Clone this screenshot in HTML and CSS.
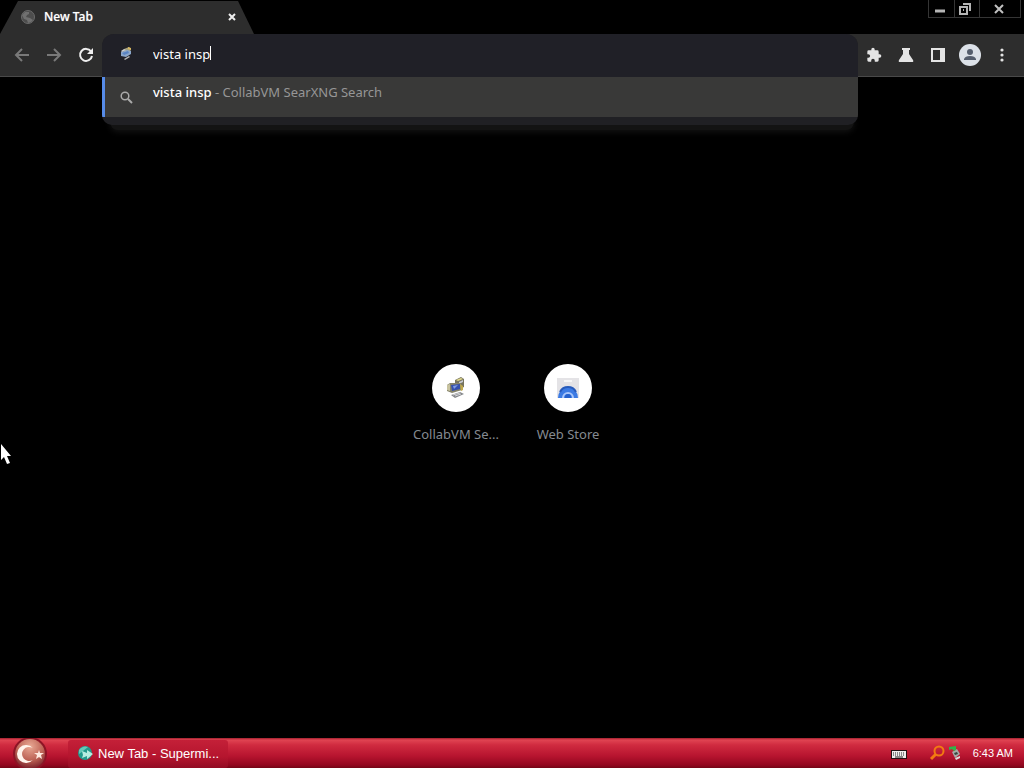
FILE: index.html
```html
<!DOCTYPE html>
<html lang="en">
<head>
<meta charset="utf-8">
<meta name="viewport" content="width=device-width, initial-scale=1">
<title>New Tab</title>
<link rel="stylesheet" href="styles.css">
</head>
<body>
<svg class="defs" aria-hidden="true">
  <symbol id="vm" viewBox="0 0 20 22">
    <path d="M9 3l6-3 3 2v8l-6 3-3-3z" fill="#77745e"/>
    <path d="M10 3l5-2 2 1-5 2z" fill="#e0d98d"/>
    <path d="M13 5l4-2v2l-4 2z" fill="#c9cbd4"/>
    <path d="M1 8l3-2 11 0 1 7-10 3-5-2z" fill="#85836a"/>
    <path d="M1 8l3-1v7l-3-1z" fill="#c8c3a0"/>
    <path d="M5 8l9-1v5l-8 2z" fill="#344fae"/>
    <path d="M7 9l5-1-4 4z" fill="#7d9ce5"/>
    <path d="M14 7l3 2v4l-2 1z" fill="#bfa84d"/>
    <path d="M5 18l9-3 4 2-9 4z" fill="#85878b"/>
    <path d="M7 18l7-2M9 19l6-2" stroke="#d4d5d8" stroke-width="1"/>
  </symbol>
  <symbol id="vm-small" viewBox="0 0 12 14">
    <path d="M4 2l5-2 2 2-1 3-5 1z" fill="#a5a17c"/>
    <path d="M8 0l3 1v2l-3-1z" fill="#d9b75f"/>
    <path d="M1 5l6-2 4 1v3l-5 3-5-1z" fill="#8ba6ca"/>
    <path d="M2 6l6-2 1 2-5 2z" fill="#5a84c4"/>
    <path d="M1 4l3-2 2 1-4 2z" fill="#d0d3d5"/>
    <path d="M4 12l5-3 1 1-5 3z" fill="#b5b5b5"/>
  </symbol>
</svg>

<header class="tabstrip">
  <div class="tab">
    <svg class="tab-icon" viewBox="0 0 14 14" aria-hidden="true">
      <circle cx="7" cy="7" r="6.5" fill="#4d4d4d" stroke="#6b6b6b"/>
      <path d="M1 5l3-3 4 0 0 2-2 1-1 2 4 1 3 2-2 2-3 1-1-3-3-1z" fill="#707070"/>
    </svg>
    <span class="tab-title">New Tab</span>
    <button class="tab-close" aria-label="Close tab"><svg width="8" height="8" viewBox="0 0 8 8"><path d="M1 1l6 6M7 1L1 7" stroke="#eee" stroke-width="2"/></svg></button>
  </div>
  <div class="window-buttons">
    <button aria-label="Minimize"><svg width="24" height="16" viewBox="0 0 24 16"><path d="M5 10h10" stroke="#b5b5b5" stroke-width="3"/></svg></button>
    <button aria-label="Restore"><svg width="24" height="16" viewBox="0 0 24 16" fill="none" stroke="#b5b5b5" stroke-width="2"><path d="M5 6h7v7H5zM8 3h7v7M8 9h1"/></svg></button>
    <button class="wide" aria-label="Close"><svg width="40" height="16" viewBox="0 0 40 16"><path d="M15 4l8 8M23 4l-8 8" stroke="#c0c0c0" stroke-width="2"/></svg></button>
  </div>
</header>

<nav class="toolbar">
  <div class="nav-buttons">
    <button aria-label="Back"><svg viewBox="0 0 16 16" fill="none" stroke="#797979" stroke-width="2"><path d="M15 8H2M8 2L2 8l6 6"/></svg></button>
    <button aria-label="Forward"><svg viewBox="0 0 16 16" fill="none" stroke="#797979" stroke-width="2"><path d="M1 8h13M8 2l6 6-6 6"/></svg></button>
    <button aria-label="Reload"><svg viewBox="0 0 16 16"><path d="M13 4.4A6 6 0 1 0 14 9" fill="none" stroke="#eee" stroke-width="2"/><path d="M15 1v6H9z" fill="#eee"/></svg></button>
  </div>
  <div class="omnibox">
    <div class="omnibox-shadow"></div>
    <div class="omnibox-panel">
      <div class="omnibox-field">
        <svg class="field-icon" aria-hidden="true"><use href="#vm-small"/></svg>
        <input class="query" type="text" value="vista insp" aria-label="Address and search bar">
        <span class="caret"></span>
      </div>
      <a class="suggestion" href="#">
        <svg class="search-icon" viewBox="0 0 13 13" fill="none" stroke="#aaa" aria-hidden="true"><circle cx="5" cy="5" r="3.800" stroke-width="1.500"/><path d="M8 8l4 4" stroke-width="2"/></svg>
        <span class="suggestion-text"><span class="match">vista insp</span> - CollabVM SearXNG Search</span>
      </a>
    </div>
  </div>
  <div class="actions">
    <button aria-label="Extensions"><svg width="16" height="16" viewBox="0 0 24 24" fill="#e4e4e4"><path d="M20.500 11H19V7a2 2 0 0 0-2-2h-4V3.500a2.500 2.500 0 0 0-5 0V5H4a2 2 0 0 0-2 2v3.800h1.500a2.700 2.700 0 0 1 0 5.400H2V20a2 2 0 0 0 2 2h3.800v-1.500a2.700 2.700 0 0 1 5.400 0V22H17a2 2 0 0 0 2-2v-4h1.500a2.500 2.500 0 0 0 0-5z"/></svg></button>
    <button aria-label="Experiments"><svg width="16" height="16" viewBox="0 0 16 16" fill="#e4e4e4"><path d="M4 1h8v2h-1v4l4 6q1 2-1 2H2q-2 0-1-2l4-6V3H4z"/></svg></button>
    <button aria-label="Side panel"><svg width="16" height="16" viewBox="0 0 16 16"><path fill="#e4e4e4" fill-rule="evenodd" d="M1 1h14v14H1zm2 2v10h7V3z"/></svg></button>
    <button aria-label="Profile"><svg width="22" height="22" viewBox="0 0 22 22"><circle cx="11" cy="11" r="11" fill="#dce1e8"/><circle cx="11" cy="8" r="3" fill="#555e6d"/><path d="M5 16v-1q1-3 6-3t6 3v1z" fill="#555e6d"/></svg></button>
    <button aria-label="Menu"><svg width="16" height="16" viewBox="0 0 16 16" fill="#e4e4e4"><circle cx="8" cy="3" r="1.600"/><circle cx="8" cy="8" r="1.600"/><circle cx="8" cy="13" r="1.600"/></svg></button>
  </div>
</nav>

<main class="page">
  <a class="shortcut" href="#">
    <span class="disc"><svg width="20" height="22"><use href="#vm"/></svg></span>
    <span class="shortcut-label">CollabVM Se...</span>
  </a>
  <a class="shortcut" href="#">
    <span class="disc"><svg width="22" height="20" viewBox="0 0 22 20"><path d="M0 0h22v20H0z" fill="#e4e3e6"/><path d="M7 3h8" stroke="#f7f7f7" stroke-width="2"/><path d="M1 20a10 11 0 0 1 20 0z" fill="#3c7be4"/><path d="M3 14a9 9 0 0 1 16 0" fill="none" stroke="#285bbb" stroke-width="2"/><path d="M6 20a5 5 0 0 1 10 0" fill="none" stroke="#a9c6fa" stroke-width="2"/><circle cx="11" cy="19" r="3" fill="#2561cd"/></svg></span>
    <span class="shortcut-label">Web Store</span>
  </a>
</main>

<footer class="taskbar">
  <button class="start" aria-label="Start">
    <svg width="34" height="30" viewBox="0 0 34 30"><defs><radialGradient id="orb" cx=".5" cy=".25" r=".75"><stop offset="0" stop-color="#e9a994"/><stop offset=".6" stop-color="#bd6355"/><stop offset="1" stop-color="#78202a"/></radialGradient></defs><circle cx="17" cy="16" r="17" fill="#8d1425"/><circle cx="17" cy="16" r="15" fill="url(#orb)"/><path d="M19.800 10.100A9 9 0 1 0 19.800 21.900A7 7 0 1 1 19.800 10.100z" fill="#fff4ec"/><path d="M26 12l1 3h4l-3 2 1 4-3-2-3 2 1-4-3-2h4z" fill="#ffe9df"/></svg>
  </button>
  <button class="task">
    <svg width="16" height="16" viewBox="0 0 16 16" aria-hidden="true"><circle cx="7" cy="7" r="7" fill="#239a8c"/><path d="M1 4q4-5 9-3l-5 4-4 3z" fill="#65c9b8"/><path d="M4 5l5 2 0-3 6 4-6 5 0-3-5 2 1-3z" fill="#b7eee1"/></svg>
    <span>New Tab - Supermi...</span>
  </button>
  <div class="tray">
    <svg class="keyboard" width="16" height="10" viewBox="0 0 16 10"><path d="M0 1h16v9H0z" fill="#241215"/><path d="M1 2h14v7H1z" fill="#eee"/><path d="M2 4h12M2 6h12" stroke="#252525" stroke-dasharray="1 1"/><path d="M4 8h8" stroke="#252525"/></svg>
    <svg width="16" height="16" viewBox="0 0 16 16" fill="none" stroke="#f27a11"><circle cx="10" cy="6" r="4.500" stroke-width="2"/><path d="M7 9l-5 5" stroke-width="3"/></svg>
    <svg width="14" height="14" viewBox="0 0 14 14"><path d="M4 6l5-3 3 5-5 4z" fill="#a7a8a6"/><path d="M6 7l3-1 1 2-3 1z" fill="#374540"/><path d="M7 12l5-2v2l-4 2z" fill="#ddd"/><path d="M1 1l7-1v4l-2 1-2-2-3 1z" fill="#32b349"/></svg>
    <time class="clock">6:43 AM</time>
  </div>
</footer>

<svg class="pointer" width="11" height="22" viewBox="0 0 11 22" aria-hidden="true"><path d="M1 1v16l3-3 3 7 3-1-3-7h4z" fill="#fff"/></svg>
</body>
</html>
```
FILE: styles.css
```css
* { box-sizing: border-box; }

body {
  margin: 0;
  min-height: 100vh;
  display: flex;
  flex-direction: column;
  background: #000;
  color: #fff;
  font: 13px/20px "Noto Sans", "Open Sans", sans-serif;
}

button {
  padding: 0;
  border: 0;
  background: none;
  color: inherit;
  font: inherit;
  display: flex;
  align-items: center;
  justify-content: center;
}

a { color: inherit; text-decoration: none; }
svg { display: block; flex: none; }
.defs { position: absolute; width: 0; height: 0; }

.tabstrip {
  display: flex;
  justify-content: space-between;
  align-items: flex-start;
  height: 34px;
}

.tab {
  display: flex;
  align-items: center;
  width: 254px;
  height: 34px;
  padding: 0 16px 0 21px;
  background: #2d2d2d;
  clip-path: polygon(18px 1px, 238px 1px, 254px 34px, 0 34px);
}

.tab-icon { width: 14px; height: 14px; }
.tab-title { flex: 1; margin-left: 9px; font-size: 12px; font-weight: 500; -webkit-text-stroke: 0 #fff; text-shadow: 0 0 1px #aaa; }
.tab-close { width: 12px; height: 16px; }

.window-buttons {
  display: flex;
  height: 18px;
  margin-right: 3px;
  border: 1px solid #353535;
  border-top: 0;
}

.window-buttons button { width: 25px; }
.window-buttons button + button { border-left: 1px solid #353535; }
.window-buttons .wide { width: 41px; }

.toolbar {
  display: flex;
  height: 43px;
  background: #2d2d2d;
  border-bottom: 1px solid #494949;
}

.nav-buttons { display: flex; width: 102px; padding-left: 6px; }
.nav-buttons button { width: 32px; }
.nav-buttons svg { width: 16px; height: 16px; }

.omnibox { position: relative; flex: 1; }

.omnibox-panel {
  position: absolute;
  top: 0;
  left: 0;
  right: 0;
  padding-bottom: 8px;
  overflow: hidden;
  border-radius: 12px 12px 10px 10px;
  background: #202024;
}

.omnibox-shadow {
  position: absolute;
  top: 80px;
  left: 8px;
  right: 4px;
  height: 16px;
  border-radius: 8px;
  background: #131313;
  box-shadow: 0 2px 6px #131313;
}

.omnibox-field {
  display: flex;
  align-items: center;
  height: 43px;
  padding: 0 18px 3px;
  background: #202027;
}

.field-icon { width: 12px; height: 14px; margin-right: 21px; }

.query {
  field-sizing: content;
  padding: 0;
  border: 0;
  outline: 0;
  background: none;
  color: #fff;
  font: inherit;
}

.caret { width: 1px; height: 14px; margin-bottom: 3px; background: #fff; }

.suggestion {
  display: flex;
  height: 40px;
  padding: 5px 15px 0;
  border-left: 3px solid #568be8;
  background: #393938;
  color: #969696;
}

.search-icon { width: 13px; height: 13px; margin: 9px 20px 0 0; }
.match { color: #fff; font-weight: 500; }

.actions { display: flex; width: 166px; padding-right: 6px; }
.actions button { flex: 1; }

.page {
  flex: 1;
  display: flex;
  justify-content: center;
  align-items: center;
  padding-bottom: 8px;
}

.shortcut {
  display: flex;
  flex-direction: column;
  align-items: center;
  gap: 12px;
  width: 112px;
  color: #858a91;
}

.disc {
  display: flex;
  align-items: center;
  justify-content: center;
  width: 48px;
  height: 48px;
  border-radius: 50%;
  background: #fff;
}

.shortcut-label { white-space: nowrap; }

.taskbar {
  display: flex;
  height: 30px;
  background: linear-gradient(#9f1f2e 0, #e04452 2px, #d02b40 7px, #b7142f 18px, #93071f 27px, #740516 30px);
  font-family: "Liberation Sans", sans-serif;
}

.start { width: 34px; height: 30px; margin-left: 13px; }

.task {
  justify-content: flex-start;
  gap: 4px;
  width: 160px;
  margin: 2px 0 0 21px;
  padding-left: 10px;
  border-radius: 3px;
  background: linear-gradient(#c42038, #b5152e 60%, #920b23);
  text-align: left;
  white-space: nowrap;
}

.tray {
  display: flex;
  align-items: center;
  gap: 3px;
  margin-left: auto;
  padding-right: 11px;
}

.keyboard { margin: 2px 19px 0 0; }
.clock { margin-left: 8px; font-size: 11px; }

.pointer {
  position: absolute;
  left: 0;
  top: 443px;
  pointer-events: none;
}
```
